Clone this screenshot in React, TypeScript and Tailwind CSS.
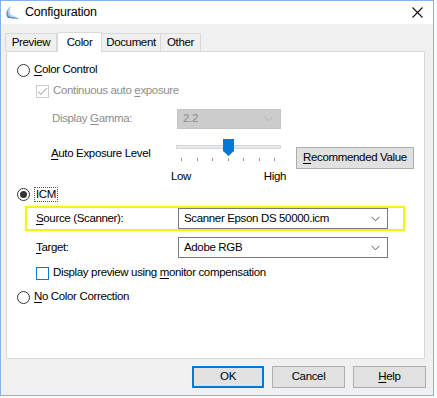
import React from 'react';

const font = { fontFamily: '"Liberation Sans", Arial, sans-serif' };

const U = ({ children }: { children: React.ReactNode }) => <span className="underline underline-offset-2">{children}</span>;

const Radio = ({ checked }: { checked?: boolean }) => (
  <span className="w-[13px] h-[13px] rounded-full border border-[#333] bg-white flex items-center justify-center shrink-0">
    {checked && <span className="w-[7px] h-[7px] rounded-full bg-[#333]" />}
  </span>
);

const Chevron = ({ color = '#555' }: { color?: string }) => (
  <svg width="9" height="6" viewBox="0 0 9 6" className="shrink-0">
    <path d="M0.5 0.8 L4.5 4.8 L8.5 0.8" fill="none" stroke={color} strokeWidth="1" />
  </svg>
);

const Select = ({ value, w }: { value: string; w: string }) => (
  <div className={`${w} h-[21px] bg-white border border-[#7a7a7a] flex items-center justify-between pl-[5px] pr-[7px] text-black`}>
    <span>{value}</span>
    <Chevron />
  </div>
);

const Btn = ({ children, primary, cls = '' }: { children: React.ReactNode; primary?: boolean; cls?: string }) => (
  <div
    className={`h-[22px] bg-[#e1e1e1] flex items-center justify-center text-black ${
      primary ? 'border-2 border-[#0078d7]' : 'border border-[#adadad]'
    } ${cls}`}
  >
    {children}
  </div>
);

export default function App() {
  const ticks = [0, 1, 2, 3, 4, 5, 6];
  return (
    <div className="w-[437px] h-[398px] bg-white text-[11.5px] tracking-[-0.35px]" style={font}>
      <div className="w-[434px] h-[396px] border border-[#7eb4ea] bg-[#f0f0f0] flex flex-col">
        {/* Title bar */}
        <div className="h-[23px] bg-white flex items-center pl-[4px] pr-[10px]">
          <svg width="15" height="15" viewBox="0 0 15 15" className="mr-[5px]">
            <path d="M6 1 C3 4 2 8 4 11 L13 13 L13 14 L3 13 C0 10 1 5 6 1 Z" fill="#5b8fd6" />
            <path d="M6 1 C4 5 4 8 6 10 L12 12 L4 11 C2 8 3 4 6 1 Z" fill="#a9c8ee" />
          </svg>
          <span className="text-[12.5px] tracking-[-0.2px] text-black">Configuration</span>
          <div className="flex-1" />
          <svg width="11" height="11" viewBox="0 0 11 11">
            <path d="M0.5 0.5 L10.5 10.5 M10.5 0.5 L0.5 10.5" stroke="#111" strokeWidth="1.1" />
          </svg>
        </div>

        {/* Tabs */}
        <div className="flex items-end pl-[4px] mt-[7px] h-[20px] text-black relative z-10">
          <div className="w-[52px] h-[18px] flex items-center justify-center border border-[#d9d9d9] border-b-0 bg-[#f0f0f0]">Preview</div>
          <div className="w-[45px] h-[20px] flex items-start justify-center pt-[1px] border border-[#d9d9d9] border-b-0 bg-white -mb-[1px]">Color</div>
          <div className="w-[59px] h-[18px] flex items-center justify-center border border-[#d9d9d9] border-b-0 border-l-0 bg-[#f0f0f0]">Document</div>
          <div className="w-[40px] h-[18px] flex items-center justify-center border border-[#d9d9d9] border-b-0 border-l-0 bg-[#f0f0f0]">Other</div>
        </div>

        {/* Tab panel */}
        <div className="ml-[5px] w-[419px] h-[308px] bg-white border border-[#d9d9d9] text-black pl-[10px] pt-[9px] flex flex-col">
          <div className="h-[18px] flex items-center gap-[4px]">
            <Radio />
            <span><U>C</U>olor Control</span>
          </div>

          <div className="h-[18px] mt-[3px] flex items-center gap-[4px] pl-[19px] text-[#8d8d8d]">
            <span className="w-[13px] h-[13px] border border-[#cccccc] bg-white flex items-center justify-center">
              <svg width="11" height="9" viewBox="0 0 11 9">
                <path d="M1 4.5 L4 7.5 L10 1" fill="none" stroke="#bcbcbc" strokeWidth="1.2" />
              </svg>
            </span>
            <span>Continuous auto <U>e</U>xposure</span>
          </div>

          <div className="h-[20px] mt-[9px] flex items-center pl-[35px] text-[#8d8d8d]">
            <span className="w-[125px]">Display <U>G</U>amma:</span>
            <div className="w-[104px] h-[20px] bg-[#cccccc] border border-[#c4c4c4] flex items-center justify-between pl-[5px] pr-[7px]">
              <span className="text-[#8a8a8a]">2.2</span>
              <Chevron color="#b0b0b0" />
            </div>
          </div>

          <div className="h-[44px] mt-[10px] flex pl-[34px]">
            <span className="w-[125px] pt-[6px]"><U>A</U>uto Exposure Level</span>
            <div className="w-[110px] flex flex-col relative">
              <div className="h-[17px] relative">
                <div className="absolute left-0 right-[5px] top-[6px] h-[4px] bg-[#e7eaea] border border-[#d6d6d6]" />
                <svg width="11" height="17" viewBox="0 0 11 17" className="absolute left-[47px] top-0">
                  <path d="M0 0 H11 V12 L5.5 17 L0 12 Z" fill="#0078d7" />
                </svg>
              </div>
              <div className="h-[6px] relative mt-[3px]">
                {ticks.map((t) => (
                  <div key={t} className="absolute top-0 w-[1px] h-[3px] bg-[#9a9a9a]" style={{ left: 5 + t * 15.5 }} />
                ))}
              </div>
              <div className="flex justify-between -ml-[5px] mt-[6px] leading-[14px]">
                <span>Low</span>
                <span>High</span>
              </div>
            </div>
            <Btn cls="w-[118px] ml-[10px] mt-[8px]"><U>R</U>ecommended Value</Btn>
          </div>

          <div className="h-[18px] mt-[2px] flex items-center gap-[4px]">
            <Radio checked />
            <span className="border border-dotted border-[#555] leading-[13px] px-[1px]">ICM</span>
          </div>

          <div className="h-[25px] mt-[3px] ml-[8px] w-[380px] border-2 border-[#f2f21e] shadow-[0_0_3px_#ffff80] flex items-center pl-[9px]">
            <span className="w-[142px]"><U>S</U>ource (Scanner):</span>
            <Select value="Scanner Epson DS 50000.icm" w="w-[210px]" />
          </div>

          <div className="h-[21px] mt-[6px] flex items-center pl-[19px]">
            <span className="w-[142px]"><U>T</U>arget:</span>
            <Select value="Adobe RGB" w="w-[210px]" />
          </div>

          <div className="h-[18px] mt-[6px] flex items-center gap-[4px] pl-[19px]">
            <span className="w-[13px] h-[13px] border border-[#0078d7] bg-white" />
            <span>Display preview using <U>m</U>onitor compensation</span>
          </div>

          <div className="h-[18px] mt-[6px] flex items-center gap-[4px]">
            <Radio />
            <span><U>N</U>o Color Correction</span>
          </div>
        </div>

        {/* Buttons */}
        <div className="flex justify-end gap-[8px] pr-[7px] mt-[7px]">
          <Btn primary cls="w-[72px]">OK</Btn>
          <Btn cls="w-[73px]">Cancel</Btn>
          <Btn cls="w-[73px]"><U>H</U>elp</Btn>
        </div>
      </div>
    </div>
  );
}
